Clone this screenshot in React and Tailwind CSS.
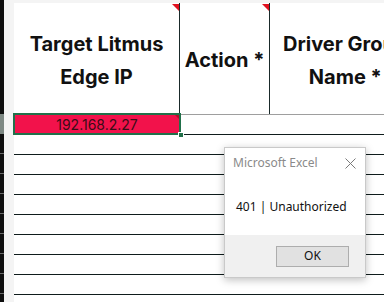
import React from 'react';

function Corner() {
  return (
    <span className="absolute right-0 top-[1px] w-0 h-0 border-l-[7px] border-l-transparent border-t-[7px] border-t-[#e0111f]" />
  );
}

export default function App() {
  const rows = [0, 1, 2, 3, 4, 5, 6, 7];
  return (
    <div className="relative w-[384px] h-[302px] overflow-hidden bg-white flex" style={{ fontFamily: 'Inter, "Noto Sans", sans-serif' }}>
      {/* row header strip */}
      <div className="flex shrink-0">
        <div className="w-[4px] flex flex-col bg-[#0e0e0e]">
          <div className="h-[114px]" />
          <div className="h-[20px] bg-[#7d8883]" />
          {rows.map((r) => (
            <div key={r} className="h-[20px] border-b border-[#6b6b6b]" />
          ))}
        </div>
        <div className="w-[10px] bg-[#f4f4f4]" />
      </div>

      {/* sheet */}
      <div className="flex-1 flex flex-col min-w-0">
        <div className="h-[3px] bg-[#f4f4f4] shrink-0" />
        <div className="h-[111px] flex shrink-0 text-[#111] font-bold text-[20px] leading-[33px]">
          <div className="relative w-[166px] shrink-0 border-r border-[#1a2a2a] flex items-center justify-center text-center">
            <Corner />
            <div className="mt-[4px] whitespace-nowrap">Target Litmus<br />Edge IP</div>
          </div>
          <div className="relative w-[90px] shrink-0 border-r border-[#1a2a2a] flex items-center justify-center text-center">
            <Corner />
            <div className="mt-[4px] whitespace-nowrap">Action *</div>
          </div>
          <div className="flex-1 overflow-hidden flex items-center">
            <div className="mt-[4px] ml-[13px] whitespace-nowrap text-center">Driver Group<br />Name *</div>
          </div>
        </div>
        <div className="h-[21px] border-t border-[#9e9e9e] border-b border-b-[#0f1c1c] shrink-0" />
        {rows.map((r) => (
          <div key={r} className="h-[20px] border-b border-[#0f1c1c] shrink-0" />
        ))}
      </div>

      {/* selected cell */}
      <div className="absolute left-[13px] top-[113px] w-[168px] h-[22px] border-2 border-[#21704a] bg-[#f2124b] flex items-center justify-center text-[14px] text-[#3a0c16]">
        192.168.2.27
        <span className="absolute right-0 top-0 w-0 h-0 border-l-[4px] border-l-transparent border-t-[4px] border-t-[#b0102a]" />
        <span className="absolute right-[-5px] bottom-[-5px] w-[6px] h-[6px] bg-[#21704a] border border-white" />
      </div>

      {/* dialog */}
      <div className="absolute left-[224px] top-[147px] w-[142px] h-[131px] bg-white border border-[#c9c9c9] shadow-[0_2px_8px_rgba(0,0,0,0.25)] flex flex-col" style={{ fontFamily: '"Noto Sans", "Open Sans", sans-serif' }}>
        <div className="h-[30px] flex items-center justify-between pl-[8px] pr-[9px]">
          <span className="text-[12px] text-[#8a8a8a]">Microsoft Excel</span>
          <svg width="11" height="11" viewBox="0 0 11 11" className="text-[#7a7a7a]">
            <path d="M0.5 0.5 L10.5 10.5 M10.5 0.5 L0.5 10.5" stroke="currentColor" strokeWidth="1" fill="none" />
          </svg>
        </div>
        <div className="flex-1 flex items-center pl-[11px] text-[12px] text-[#111]">401 | Unauthorized</div>
        <div className="h-[42px] bg-[#f0f0f0] flex items-center justify-end pr-[16px]">
          <button className="w-[73px] h-[21px] border border-[#adadad] bg-[#e1e1e1] text-[12px] text-[#111] flex items-center justify-center">OK</button>
        </div>
      </div>
    </div>
  );
}
